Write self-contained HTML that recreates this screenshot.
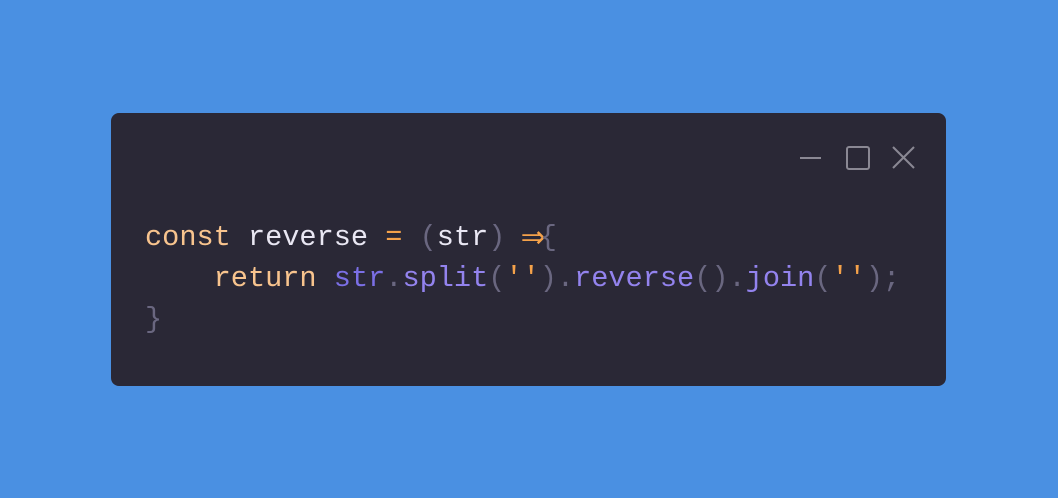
<!DOCTYPE html>
<html><head><style>
html,body{margin:0;padding:0;}
body{width:1058px;height:498px;background:#4a90e2;position:relative;overflow:hidden;}
.card{position:absolute;left:111px;top:113px;width:835px;height:273px;background:#2a2836;border-radius:8px;}
pre{position:absolute;left:34px;top:104px;margin:0;font-family:"Liberation Mono","DejaVu Sans Mono",monospace;font-size:28.6px;line-height:41px;color:#e9e7f3;}
.k{color:#f8c48e}.o{color:#f5a24a}.p{color:#6a6780}.v{color:#7b6fe6}.f{color:#9383ee}
.arr{display:inline-block;width:17.2px;overflow:visible;vertical-align:top;font-family:"DejaVu Sans",sans-serif;font-size:30px;line-height:41px;margin-left:-2px;margin-right:2px}
svg{position:absolute;}
</style></head><body>
<div class="card">
<svg style="left:688px;top:32px" width="120" height="26" viewBox="0 0 120 26" fill="none" stroke="#8a8893" stroke-width="2">
<line x1="1" y1="13" x2="22" y2="13"/>
<rect x="48" y="2" width="22" height="22" rx="2"/>
<line x1="94" y1="2" x2="115" y2="23"/><line x1="115" y1="2" x2="94" y2="23"/>
</svg>
<pre><span class="k">const</span> reverse <span class="o">=</span> <span class="p">(</span>str<span class="p">)</span> <span class="o arr">⇒</span><span class="p">{</span>
    <span class="k">return</span> <span class="v">str</span><span class="p">.</span><span class="f">split</span><span class="p">(</span><span class="o">''</span><span class="p">).</span><span class="f">reverse</span><span class="p">().</span><span class="f">join</span><span class="p">(</span><span class="o">''</span><span class="p">);</span>
<span class="p">}</span></pre>
</div>
</body></html>
